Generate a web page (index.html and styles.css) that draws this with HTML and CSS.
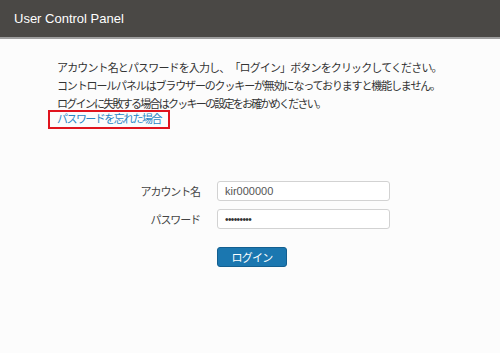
FILE: index.html
```html
<!DOCTYPE html>
<html lang="ja">
<head>
<meta charset="utf-8">
<title>User Control Panel</title>
<link rel="stylesheet" href="styles.css">
</head>
<body>
<header class="topbar">
  <span class="brand">User Control Panel</span>
</header>
<main class="content">
  <p class="intro"><span class="line wide">アカウント名とパスワードを入力し、「ログイン」ボタンをクリックしてください。</span><span class="line">コントロールパネルはブラウザーのクッキーが無効になっておりますと機能しません。</span><span class="line tight">ログインに失敗する場合はクッキーの設定をお確かめください。</span></p>
  <a class="forgot" href="#">パスワードを忘れた場合</a>
  <form class="login">
    <label class="lbl" for="acc">アカウント名</label>
    <input class="field" id="acc" type="text" value="kir000000">
    <label class="lbl" for="pw">パスワード</label>
    <input class="field pass" id="pw" type="password" value="abcdefghi">
    <span></span>
    <div class="actions"><button class="btn" type="button">ログイン</button></div>
  </form>
</main>
</body>
</html>
```
FILE: styles.css
```css
html, body {
  margin: 0;
  padding: 0;
  background: #fcfcfc;
  font-family: "Liberation Sans", "Noto Sans CJK JP", sans-serif;
  color: #333;
  text-spacing-trim: space-all;
}
.topbar {
  height: 37px;
  background: #4a4845;
  border-bottom: 2px solid #9e9e9e;
  display: flex;
  align-items: center;
  padding-left: 14px;
}
.brand {
  color: #fff;
  font-size: 13px;
}
.content {
  padding: 20px 0 0 57px;
}
.intro {
  margin: 0;
  font-size: 11px;
  line-height: 18px;
  color: #333;
  white-space: nowrap;
}
.line {
  display: block;
  letter-spacing: -1.15px;
}
.line.wide {
  letter-spacing: -0.86px;
}
.line.tight {
  letter-spacing: -1.75px;
}
.forgot {
  display: block;
  width: max-content;
  margin: -3px 0 0 -9px;
  padding: 0 7px;
  border: 2px solid #e0141e;
  line-height: 15px;
  font-size: 11px;
  letter-spacing: -1.55px;
  color: #2a86c4;
  text-decoration: none;
}
.login {
  margin-top: 52px;
  display: grid;
  grid-template-columns: 143px 173px;
  column-gap: 17px;
  row-gap: 8px;
  align-items: center;
}
.lbl {
  text-align: right;
  font-size: 11px;
  letter-spacing: -1.1px;
  color: #444;
}
.field {
  box-sizing: border-box;
  width: 173px;
  height: 20px;
  border: 1px solid #d2d2d2;
  border-radius: 3px;
  background: #fff;
  padding: 0 7px;
  font-family: "Liberation Sans", sans-serif;
  font-size: 11px;
  color: #555;
  outline: none;
}
.pass {
  font-size: 10px;
  letter-spacing: -0.6px;
  color: #333;
}
.actions {
  margin-top: 10px;
}
.btn {
  box-sizing: border-box;
  width: 70px;
  height: 20px;
  border: 1px solid #135f90;
  border-radius: 3px;
  background: #1b77b0;
  color: #fff;
  font-family: "Liberation Sans", "Noto Sans CJK JP", sans-serif;
  font-size: 11px;
  letter-spacing: -0.8px;
  padding: 0;
}
```
